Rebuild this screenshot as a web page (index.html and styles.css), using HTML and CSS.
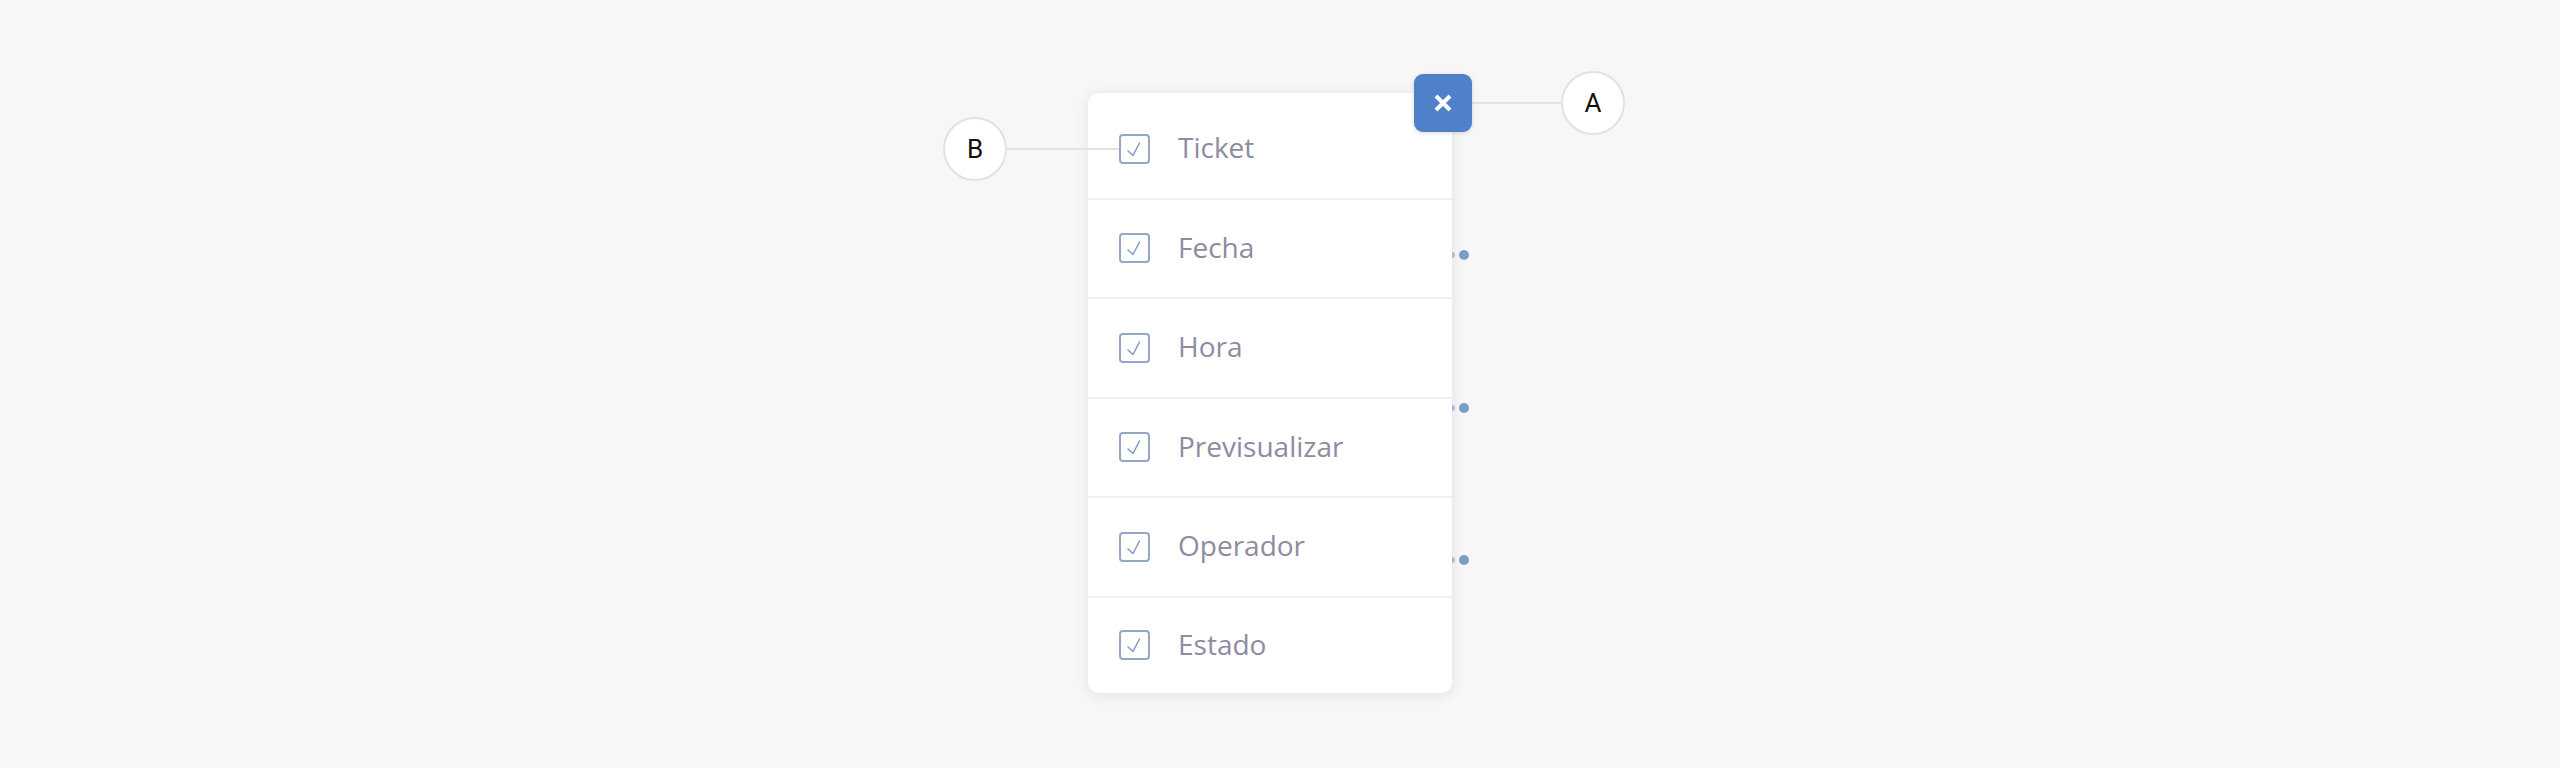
FILE: index.html
```html
<!DOCTYPE html>
<html lang="es">
<head>
<meta charset="utf-8">
<title>Columnas</title>
<link rel="stylesheet" href="styles.css">
</head>
<body>
<div class="stage">
  <div class="card">
    <button class="close" aria-label="Cerrar">
      <svg width="20" height="20" viewBox="0 0 20 20"><path d="M3 3 L17 17 M17 3 L3 17" stroke="#fff" stroke-width="4" stroke-linecap="butt"/></svg>
    </button>
    <div class="line line-a"></div>
    <div class="marker marker-a">A</div>
    <div class="line line-b"></div>
    <div class="marker marker-b">B</div>
    <span class="dot dot-1"></span><span class="sliver sliver-1"></span>
    <span class="dot dot-2"></span><span class="sliver sliver-2"></span>
    <span class="dot dot-3"></span><span class="sliver sliver-3"></span>
    <ul class="list">
      <li class="row"><span class="check"><svg viewBox="0 0 30 30"><polyline points="9,17 14,21.5 20.5,9"/></svg></span><span class="label">Ticket</span></li>
      <li class="row"><span class="check"><svg viewBox="0 0 30 30"><polyline points="9,17 14,21.5 20.5,9"/></svg></span><span class="label">Fecha</span></li>
      <li class="row"><span class="check"><svg viewBox="0 0 30 30"><polyline points="9,17 14,21.5 20.5,9"/></svg></span><span class="label">Hora</span></li>
      <li class="row"><span class="check"><svg viewBox="0 0 30 30"><polyline points="9,17 14,21.5 20.5,9"/></svg></span><span class="label">Previsualizar</span></li>
      <li class="row"><span class="check"><svg viewBox="0 0 30 30"><polyline points="9,17 14,21.5 20.5,9"/></svg></span><span class="label">Operador</span></li>
      <li class="row"><span class="check"><svg viewBox="0 0 30 30"><polyline points="9,17 14,21.5 20.5,9"/></svg></span><span class="label">Estado</span></li>
    </ul>
  </div>
</div>
</body>
</html>
```
FILE: styles.css
```css
html, body {
  margin: 0;
  padding: 0;
  background: #f7f7f7;
  height: 100%;
}
body {
  font-family: "Open Sans", "Noto Sans", sans-serif;
  overflow: hidden;
}
.stage {
  padding-top: 93px;
  padding-left: 1088px;
}
.card {
  position: relative;
  width: 364px;
  height: 600px;
  box-sizing: border-box;
  padding-top: 7px;
  background: #ffffff;
  border-radius: 11px;
  box-shadow: 0 2px 14px rgba(0, 0, 0, 0.09);
}
.list {
  list-style: none;
  margin: 0;
  padding: 0;
}
.row {
  display: flex;
  align-items: center;
  height: 99.5px;
  box-sizing: border-box;
  padding-left: 31px;
  border-bottom: 2px solid #f1f1f3;
}
.row:last-child {
  border-bottom: none;
  height: 95.5px;
}
.check {
  position: relative;
  z-index: 2;
  width: 31px;
  height: 30px;
  box-sizing: border-box;
  border: 2px solid #93a7c9;
  border-radius: 4px;
  background: #fff;
  flex: none;
}
.check svg {
  position: absolute;
  left: -2px;
  top: -2px;
  width: 30px;
  height: 30px;
  fill: none;
  stroke: #7f9ac6;
  stroke-width: 1.5;
  stroke-linecap: round;
  stroke-linejoin: round;
}
.label {
  margin-left: 28px;
  font-size: 28px;
  color: #8d8ca1;
  line-height: 1;
  margin-top: -3px;
}
.close {
  position: absolute;
  top: -19px;
  right: -20px;
  width: 58px;
  height: 58px;
  border: none;
  border-radius: 9px;
  background: #5080c9;
  box-shadow: 0 1px 4px rgba(0, 0, 0, 0.15);
  display: flex;
  align-items: center;
  justify-content: center;
  padding: 0;
  z-index: 3;
}
.close svg {
  width: 20px;
  height: 20px;
}
.line {
  position: absolute;
  height: 2px;
  background: #e2e2e2;
  z-index: 1;
}
.line-a {
  left: 384px;
  width: 89px;
  top: 9px;
}
.line-b {
  left: -81px;
  width: 113px;
  top: 55px;
}
.marker {
  position: absolute;
  width: 64px;
  height: 64px;
  box-sizing: border-box;
  border: 2px solid #e3e1e1;
  border-radius: 50%;
  background: #fff;
  display: flex;
  align-items: center;
  justify-content: center;
  font-family: Roboto, "Liberation Sans", sans-serif;
  font-size: 26px;
  color: #111;
  z-index: 2;
}
.marker-a {
  left: 473px;
  top: -22px;
}
.marker-b {
  left: -145px;
  top: 24px;
}
.dot {
  position: absolute;
  left: 371px;
  width: 10px;
  height: 10px;
  border-radius: 50%;
  background: #7e9ccb;
}
.sliver {
  position: absolute;
  left: 364px;
  width: 3px;
  height: 6px;
  border-radius: 0 3px 3px 0;
  background: #a9bcdc;
}
.dot-1 { top: 157px; }
.dot-2 { top: 310px; }
.dot-3 { top: 462px; }
.sliver-1 { top: 159px; }
.sliver-2 { top: 312px; }
.sliver-3 { top: 464px; }
```
